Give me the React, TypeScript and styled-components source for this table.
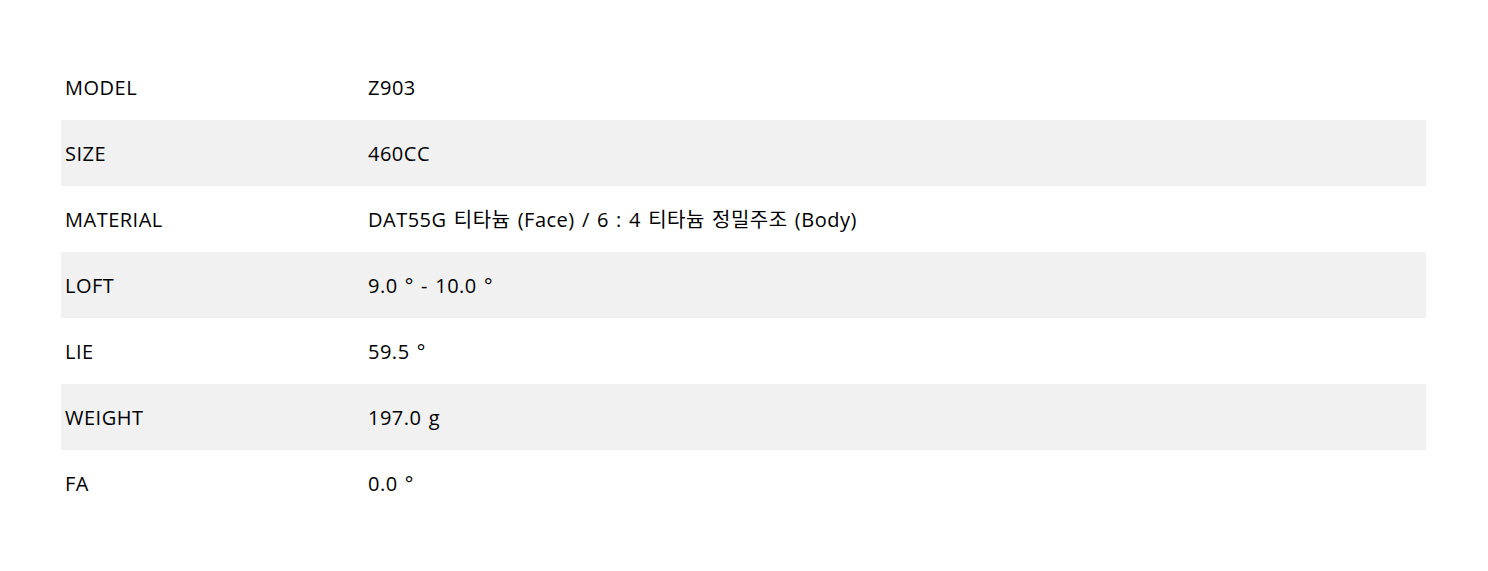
import React from "react";
import styled, { createGlobalStyle } from "styled-components";

const Global = createGlobalStyle`
  html, body { margin: 0; padding: 0; background: #fff; }
  body { font-family: "Open Sans", "Noto Sans CJK KR", sans-serif; color: #000; }
`;

const Page = styled.div`
  padding: 54px 62px 0 61px;
`;

const Table = styled.div`
  display: flex;
  flex-direction: column;
`;

const Row = styled.div<{ $shaded: boolean }>`
  display: grid;
  grid-template-columns: 303px 1fr;
  height: 66px;
  align-items: center;
  background: ${(p) => (p.$shaded ? "#f1f1f1" : "transparent")};
`;

const Cell = styled.div`
  padding: 2px 0 0 4px;
  font-size: 20px;
  line-height: 26px;
  letter-spacing: 0.5px;
  word-spacing: 1.5px;
  white-space: nowrap;
`;

const rows: [string, string][] = [
  ["MODEL", "Z903"],
  ["SIZE", "460CC"],
  ["MATERIAL", "DAT55G 티타늄 (Face) / 6 : 4 티타늄 정밀주조 (Body)"],
  ["LOFT", "9.0 ° - 10.0 °"],
  ["LIE", "59.5 °"],
  ["WEIGHT", "197.0 g"],
  ["FA", "0.0 °"],
];

export default function App() {
  return (
    <>
      <Global />
      <Page>
        <Table>
          {rows.map(([k, v], i) => (
            <Row key={k} $shaded={i % 2 === 1}>
              <Cell>{k}</Cell>
              <Cell>{v}</Cell>
            </Row>
          ))}
        </Table>
      </Page>
    </>
  );
}
